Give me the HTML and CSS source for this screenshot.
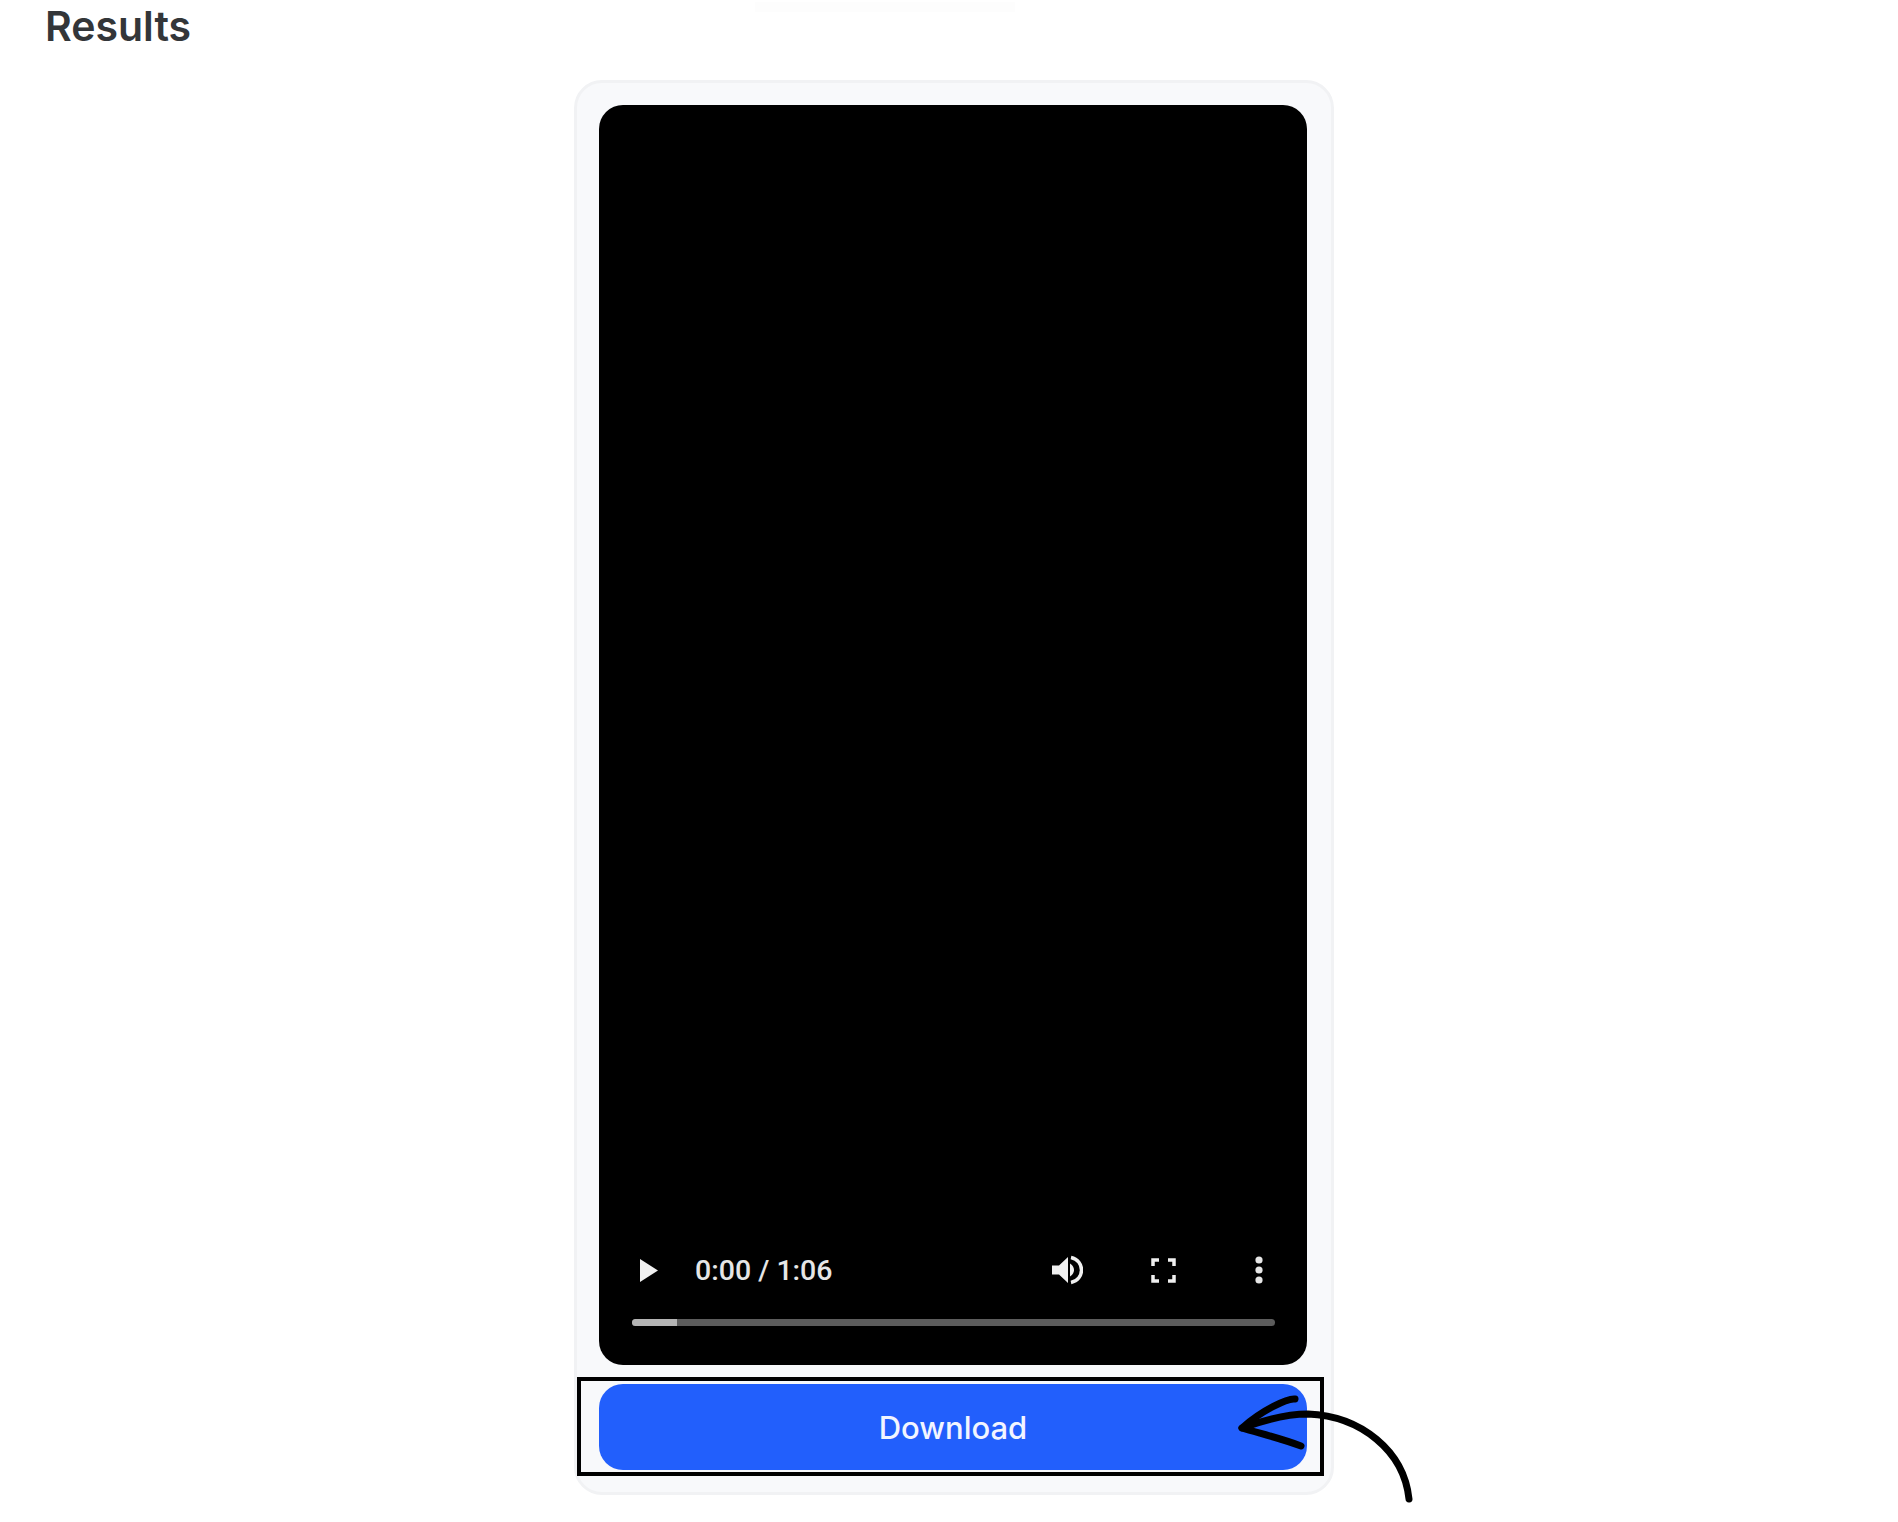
FILE: index.html
```html
<!DOCTYPE html>
<html>
    <head>
        <meta charset="utf-8">
        <title>Results</title>
        <link rel="stylesheet" href="styles.css">
    </head>
    <body>
        <div class="topLine"></div>
        <h1 class="pageTitle">Results</h1>
        <div class="cardRow">
            <div class="resultCard">
                <div class="videoBox">
                    <div class="controlRow">
                        <svg class="playIcon" viewBox="0 0 18 23"><path d="M0 0L18 11.5L0 23Z"/></svg>
                        <span class="timeText">0:00 / 1:06</span>
                        <svg class="volumeIcon" viewBox="0 0 31 30">
                            <path class="iconFill" d="M0 10.5H7L16 2V28L7 19.5H0Z"/>
                            <path class="iconFill" d="M18 8.5C21 10.5 22 13 22 15S21 19.5 18 21.5Z"/>
                            <path class="iconLine" d="M19 2.5C26 4 29.5 9.5 29.5 15S26 26 19 27.5"/>
                        </svg>
                        <svg class="fullIcon" viewBox="0 0 25 25">
                            <path class="iconLine" d="M2 8V2H8M17 2H23V8M23 17V23H17M8 23H2V17"/>
                        </svg>
                        <svg class="menuIcon" viewBox="0 0 8 28">
                            <circle cx="4" cy="4" r="3.6"/>
                            <circle cx="4" cy="14" r="3.6"/>
                            <circle cx="4" cy="24" r="3.6"/>
                        </svg>
                    </div>
                    <div class="progressBar"><div class="progressDone"></div></div>
                </div>
                <button type="button" class="downloadButton">Download</button>
                <div class="markBox"></div>
                <svg class="markArrow" viewBox="0 0 180 110">
                    <path d="M6 32C28 24 50 18 72 18C125 20 168 55 173 103"/>
                    <path d="M59 3C52 2 26 14 6 32C22 37 44 42 65 50"/>
                </svg>
            </div>
        </div>
    </body>
</html>
```

FILE: styles.css
```css
html{
	background-color: #ffffff;
}
body{
	margin: 0;
	height: 1522px;
	overflow: hidden;
	font-family: "Inter", "Liberation Sans", sans-serif;
}
.topLine{
	position: absolute;
	left: 755px;
	top: 2px;
	width: 260px;
	height: 10px;
	background-color: #fdfdfd;
}
.pageTitle{
	margin: 0;
	padding: 2px 0 0 45px;
	height: 80px;
	box-sizing: border-box;
	font-size: 41px;
	line-height: 48px;
	font-weight: 600;
	color: #333639;
}
.cardRow{
	display: flex;
	justify-content: center;
	padding-left: 10px;
}
.resultCard{
	position: relative;
	width: 760px;
	height: 1415px;
	box-sizing: border-box;
	padding: 22px 24px 22px 22px;
	display: flex;
	flex-direction: column;
	gap: 19px;
	background-color: #f8f9fb;
	border: 3px solid #f1f2f4;
	border-radius: 28px;
}
.videoBox{
	width: 100%;
	height: 1260px;
	box-sizing: border-box;
	padding: 0 32px 39px 33px;
	display: flex;
	flex-direction: column;
	justify-content: flex-end;
	background-color: #000000;
	border-radius: 24px;
}
.controlRow{
	display: flex;
	align-items: center;
	height: 30px;
	margin-bottom: 34px;
	padding-left: 8px;
	color: #e6e6e6;
}
.playIcon{
	width: 18px;
	height: 23px;
	margin-right: 37px;
	fill: #f0f0f0;
}
.timeText{
	width: 357px;
	font-family: "Roboto", "Liberation Sans", sans-serif;
	font-size: 28.5px;
	font-weight: 500;
	white-space: nowrap;
}
.volumeIcon{
	width: 31px;
	height: 30px;
	margin-right: 68px;
}
.iconFill{
	fill: #f0f0f0;
}
.iconLine{
	fill: none;
	stroke: #f0f0f0;
	stroke-width: 3.5;
}
.fullIcon{
	width: 25px;
	height: 25px;
	margin-right: 79px;
}
.menuIcon{
	width: 8px;
	height: 28px;
	fill: #e6e6e6;
}
.progressBar{
	height: 7px;
	border-radius: 4px;
	background-color: #5c5c5c;
	overflow: hidden;
}
.progressDone{
	width: 45px;
	height: 100%;
	background-color: #b4b4b4;
}
.downloadButton{
	width: 100%;
	height: 86px;
	border: none;
	border-radius: 24px;
	background-color: #225ffc;
	color: #f2f5ff;
	font-family: "Inter", "Liberation Sans", sans-serif;
	font-size: 31px;
	font-weight: 500;
}
.markBox{
	position: absolute;
	left: 0;
	top: 1294px;
	width: 747px;
	height: 99px;
	box-sizing: border-box;
	border: 4px solid #000000;
}
.markArrow{
	position: absolute;
	left: 659px;
	top: 1313px;
	width: 180px;
	height: 110px;
	overflow: visible;
	fill: none;
	stroke: #000000;
	stroke-width: 7;
	stroke-linecap: round;
	stroke-linejoin: round;
}
```
